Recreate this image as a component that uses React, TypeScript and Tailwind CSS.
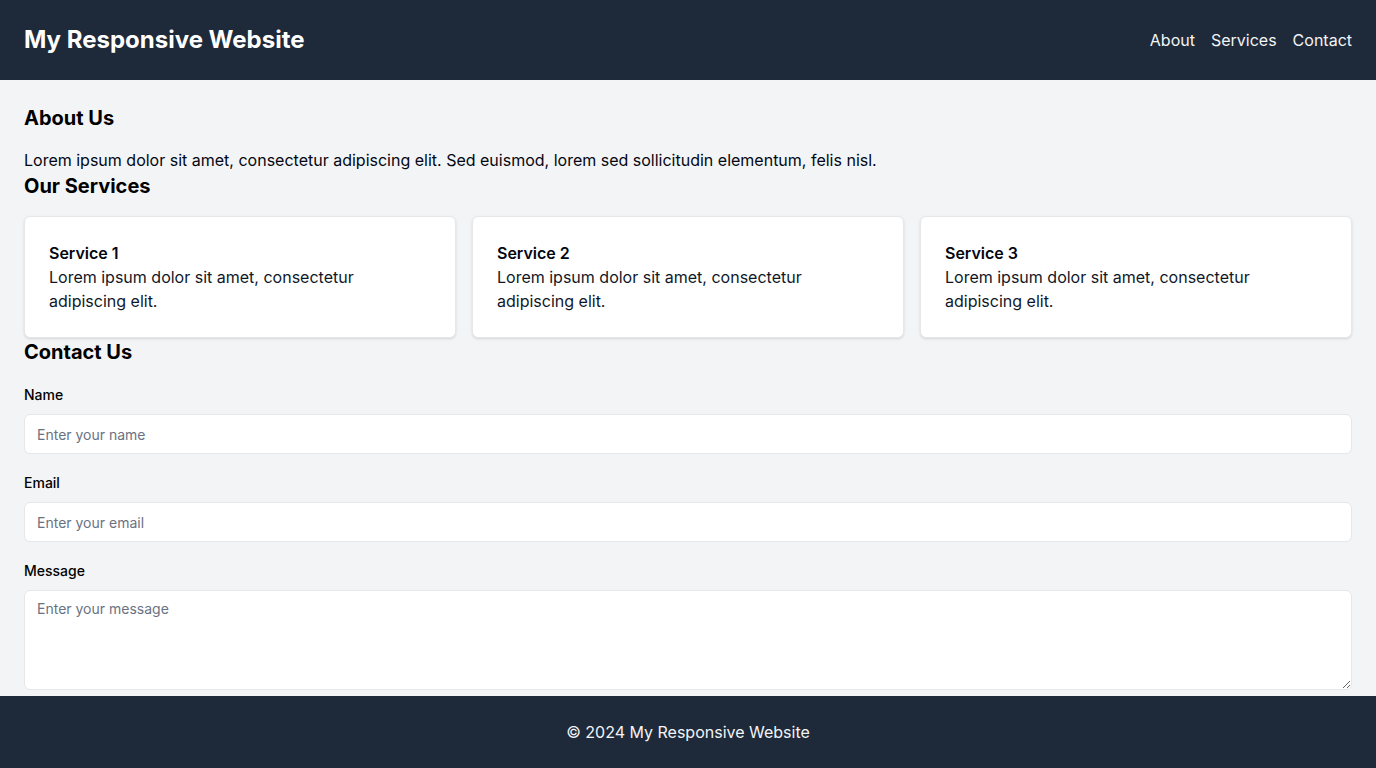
import React from "react";

const services = [
  { title: "Service 1", text: "Lorem ipsum dolor sit amet, consectetur adipiscing elit." },
  { title: "Service 2", text: "Lorem ipsum dolor sit amet, consectetur adipiscing elit." },
  { title: "Service 3", text: "Lorem ipsum dolor sit amet, consectetur adipiscing elit." },
];

const App = () => {
  return (
    <div className="h-screen flex flex-col bg-gray-100 text-black font-['Inter','Liberation_Sans',sans-serif]">
      <header className="bg-gray-800 text-white">
        <div className="px-6 py-6 flex items-center justify-between">
          <h1 className="text-2xl font-bold">My Responsive Website</h1>
          <nav className="flex items-center gap-4 text-base text-gray-100">
            <a href="#about">About</a>
            <a href="#services">Services</a>
            <a href="#contact">Contact</a>
          </nav>
        </div>
      </header>

      <main className="flex-1 overflow-hidden px-6 pt-6">
        <section id="about">
          <h2 className="text-xl font-bold mb-4">About Us</h2>
          <p className="text-base text-gray-950">
            Lorem ipsum dolor sit amet, consectetur adipiscing elit. Sed euismod, lorem sed sollicitudin elementum, felis nisl.
          </p>
        </section>

        <section id="services">
          <h2 className="text-xl font-bold mb-4">Our Services</h2>
          <div className="grid grid-cols-3 gap-4">
            {services.map((s) => (
              <div key={s.title} className="bg-white border border-gray-200 rounded-md shadow-sm p-6">
                <h3 className="font-semibold text-gray-950">{s.title}</h3>
                <p className="text-gray-900 pr-16">{s.text}</p>
              </div>
            ))}
          </div>
        </section>

        <section id="contact">
          <h2 className="text-xl font-bold mb-4">Contact Us</h2>
          <form>
            <div className="mb-4">
              <label className="block text-sm font-medium leading-[26px] mb-[6px]">Name</label>
              <input
                type="text"
                placeholder="Enter your name"
                className="w-full h-10 px-3 bg-white border border-gray-200 rounded-md text-sm placeholder:text-gray-500"
              />
            </div>
            <div className="mb-4">
              <label className="block text-sm font-medium leading-[26px] mb-[6px]">Email</label>
              <input
                type="email"
                placeholder="Enter your email"
                className="w-full h-10 px-3 bg-white border border-gray-200 rounded-md text-sm placeholder:text-gray-500"
              />
            </div>
            <div className="mb-4">
              <label className="block text-sm font-medium leading-[26px] mb-[6px]">Message</label>
              <textarea
                placeholder="Enter your message"
                className="w-full h-[100px] px-3 py-2 bg-white border border-gray-200 rounded-md text-sm placeholder:text-gray-500"
              />
            </div>
          </form>
        </section>
      </main>

      <footer className="bg-gray-800 text-gray-100 py-6 text-center">
        <p>© 2024 My Responsive Website</p>
      </footer>
    </div>
  );
};

export default App;
